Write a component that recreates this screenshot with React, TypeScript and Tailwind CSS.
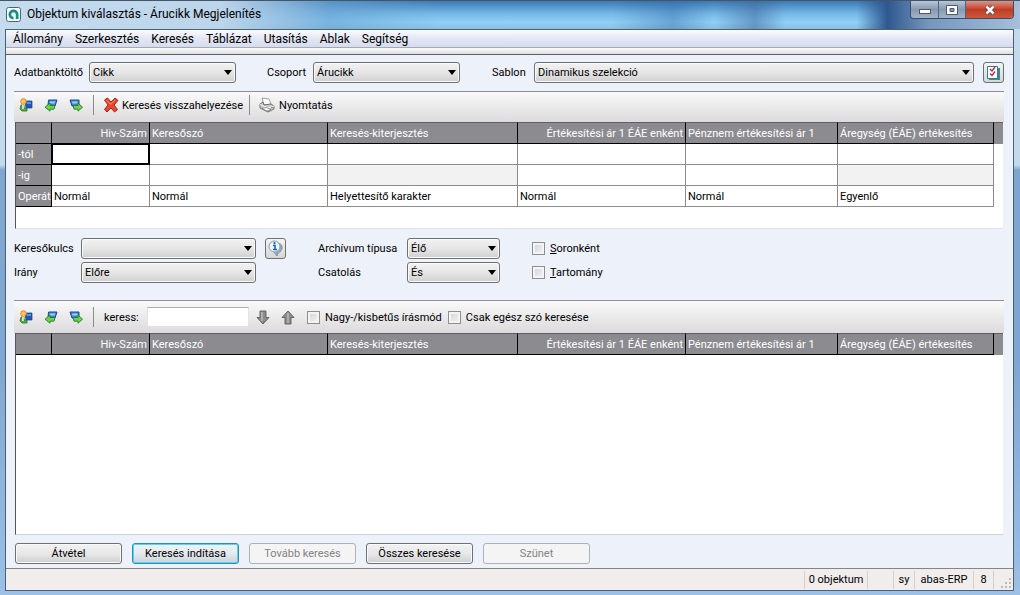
import { useId } from "react";
import type { ReactNode } from "react";

type Column = {
  key: string;
  title: string;
  col: string;
  alignRight?: boolean;
  operator: string;
  toLocked?: boolean;
};

const COLUMNS: Column[] = [
  { key: "ref", title: "Hiv-Szám", col: "w-[98px]", alignRight: true, operator: "Normál" },
  { key: "search", title: "Keresőszó", col: "w-[178px]", operator: "Normál" },
  { key: "ext", title: "Keresés-kiterjesztés", col: "w-[190px]", operator: "Helyettesítő karakter", toLocked: true },
  { key: "price", title: "Értékesítési ár 1 ÉÁE enként", col: "w-[168px]", alignRight: true, operator: "Normál" },
  { key: "currency", title: "Pénznem értékesítési ár 1", col: "w-[152px]", operator: "Normál" },
  { key: "unit", title: "Áregység (ÉÁE) értékesítés", col: "w-[156px]", operator: "Egyenlő", toLocked: true },
];

const MENU = ["Állomány", "Szerkesztés", "Keresés", "Táblázat", "Utasítás", "Ablak", "Segítség"];

function Select({ id, value, className }: { id: string; value: string; className: string }) {
  return (
    <div className={`relative h-[21px] ${className}`}>
      <select
        id={id}
        defaultValue={value}
        className="block h-full w-full appearance-none rounded-[3px] border border-[#707070] bg-linear-to-b from-[#f2f2f2] via-[#e6e6e6] to-[#cfcfcf] pr-5 pl-[3px] text-black shadow-[inset_0_0_0_1px_#fafafa]"
      >
        <option>{value}</option>
      </select>
      <svg className="pointer-events-none absolute top-2 right-1 h-[5px] w-2" viewBox="0 0 8 5">
        <path d="M0 0h8L4 5z" fill="#000" />
      </svg>
    </div>
  );
}

function Check({ children }: { children: ReactNode }) {
  const id = useId();
  return (
    <div className="flex items-center gap-[5px]">
      <input
        id={id}
        type="checkbox"
        className="size-[13px] appearance-none border border-[#8e8f8f] bg-linear-to-br from-[#cdd1d5] to-[#f6f6f6] shadow-[inset_0_0_0_2px_#f4f4f4] checked:from-[#3c5a9a]"
      />
      <label htmlFor={id}>{children}</label>
    </div>
  );
}

function RowIcon() {
  return (
    <svg width="14" height="14" viewBox="0 0 14 14">
      <path d="M6 3h7v7H7z" fill="#1f56b8" stroke="#173f86" strokeWidth=".7" />
      <path d="M8 4h4v2H8z" fill="#4c9be8" />
      <path d="M2 7h3v3h3v3H3L1 11z" fill="#4fae4a" stroke="#25702b" strokeWidth=".8" />
      <path d="M3 6h2v5H3z" fill="#d8d8c8" />
      <circle cx="4.500" cy="3.500" r="2.800" fill="#ffc45c" stroke="#d9801c" strokeWidth=".9" />
    </svg>
  );
}

function ShiftIcon({ right = false }: { right?: boolean }) {
  return (
    <svg width="14" height="14" viewBox="0 0 14 14">
      {right ? (
        <>
          <path d="M1 2h9v6H3z" fill="#3d7fdd" stroke="#1b4a94" />
          <path d="M3 3.500h5.500v2H3.500z" fill="#9bd3f7" />
          <path d="M4 7.500h5V5L13.500 9.200l-4.500 4v-2H5z" fill="#6fd04c" stroke="#277a25" strokeWidth=".9" />
        </>
      ) : (
        <>
          <path d="M4.500 2H13l-2 6H4z" fill="#3d7fdd" stroke="#1b4a94" />
          <path d="M6 3.500h5.500l-1 2H5.500z" fill="#9bd3f7" />
          <path d="M11 7.500H6V5L1 9.200l5 4v-2h4z" fill="#6fd04c" stroke="#277a25" strokeWidth=".9" />
        </>
      )}
    </svg>
  );
}

function ArrowIcon({ up = false }: { up?: boolean }) {
  return (
    <svg width="14" height="15" viewBox="0 0 14 15">
      <path
        d={up ? "M7 1l6 6.500h-3V14H4V7.500H1z" : "M4 1h6v6.500h3L7 14 1 7.500h3z"}
        fill="#8b8b8b"
        stroke="#666"
        strokeLinejoin="round"
      />
      <path d={up ? "M7 3v10" : "M6 2v9"} stroke="#bababa" strokeWidth="1.500" />
    </svg>
  );
}

function RowTools() {
  return (
    <div className="flex h-5 items-center gap-[11px] border-r border-[#8c8c8c] pr-[10px] pl-[5px]">
      <button type="button" aria-label="Sor beszúrása"><RowIcon /></button>
      <button type="button" aria-label="Előző"><ShiftIcon /></button>
      <button type="button" aria-label="Következő"><ShiftIcon right /></button>
    </div>
  );
}

function TableHead() {
  return (
    <>
      <colgroup>
        <col className="w-9" />
        {COLUMNS.map((c) => (
          <col key={c.key} className={c.col} />
        ))}
        <col />
      </colgroup>
      <thead>
        <tr className="h-[22px] bg-[#8b8b90] text-white">
          <td className="border-t border-r border-b border-t-[#5e5e64] border-r-black border-b-black" />
          {COLUMNS.map((c) => (
            <th
              key={c.key}
              scope="col"
              className={`overflow-hidden border-t border-r border-b border-t-[#5e5e64] border-r-black border-b-black px-[2px] font-normal whitespace-nowrap ${c.alignRight ? "text-right" : "text-left"}`}
            >
              {c.title}
            </th>
          ))}
          <td className="border-t border-[#5e5e64]" />
        </tr>
      </thead>
    </>
  );
}

function InputRow({ label, locked = false, focus = false }: { label: string; locked?: boolean; focus?: boolean }) {
  return (
    <tr className="h-[21px]">
      <th scope="row" className="border-r border-b border-black bg-[#8b8b90] px-[2px] text-left font-normal text-white">
        {label}
      </th>
      {COLUMNS.map((c, i) => {
        const active = focus && i === 0;
        return (
          <td
            key={c.key}
            className={`border-r border-b ${active ? "border-black" : "border-[#8c8c8c]"} ${locked && c.toLocked ? "bg-[#f2f2f2]" : ""}`}
          >
            <input
              aria-label={`${c.title} ${label}`}
              disabled={locked && c.toLocked}
              className={`block h-5 w-full px-[2px] outline-none ${active ? "border border-black" : ""}`}
            />
          </td>
        );
      })}
      <td />
    </tr>
  );
}

function PushButton({ children, primary, disabled }: { children: ReactNode; primary?: boolean; disabled?: boolean }) {
  const look = disabled
    ? "border-[#adb2b5] bg-[#f4f4f4] text-[#838383]"
    : primary
      ? "border-[#2a8fb8] bg-linear-to-b from-[#f0f4f6] via-[#e4eaee] to-[#c9d3da] shadow-[inset_0_0_0_1px_#5fd0f0]"
      : "border-[#707070] bg-linear-to-b from-[#f2f2f2] via-[#e8e8e8] to-[#cfcfcf] shadow-[inset_0_0_0_1px_#fafafa]";
  return (
    <button type="button" disabled={disabled} className={`h-[21px] w-[107px] rounded-[3px] border ${look}`}>
      {children}
    </button>
  );
}

const iconButton =
  "flex size-[21px] items-center justify-center rounded-[3px] border border-[#707070] bg-linear-to-b from-[#f4f4f4] to-[#d6d6d6]";
const toolbar = "flex items-center border-t border-[#8a9096] bg-linear-to-b from-[#fafafa] to-[#dcdadc]";

export default function App() {
  return (
    <div className="flex min-h-screen flex-col bg-[linear-gradient(180deg,#c3daec_0px,#c3daec_165px,#7fa6cf_170px,#7fa6d2_60%,#9cc0e6_100%)] pr-[6px] pb-1 pl-[5px] font-[Roboto,'Liberation_Sans',sans-serif] text-[11px] leading-[13px] text-black">
      {/* Title bar */}
      <header className="-mr-[6px] -ml-[5px] flex h-[29px] items-start justify-between border-t border-[#456] bg-[linear-gradient(90deg,#c5dcee_0px,#bcd5ea_220px,#6aa3d299_330px,#74b4e300_440px),linear-gradient(90deg,transparent_60%,#2f66a566_66%,transparent_70%,#3f6a9e88_74%,transparent_77%,transparent_84%,#2e588f_87%,#7596bd_91%,#a6bfdb_100%),linear-gradient(180deg,#3c7ab5_0%,#76b8e6_45%,#8fd0f5_75%,#8cbfe0_100%)] pr-[6px] pl-[6px]">
        <div className="flex h-[26px] items-center gap-[6px]">
          <svg width="15" height="15" viewBox="0 0 15 15">
            <rect x=".5" y=".5" width="14" height="14" rx="2" fill="#fff" stroke="#426778" />
            <rect x="2" y="2" width="11" height="11" rx="1" fill="#f4fbfa" />
            <path d="M7.500 2.500a5 5 0 0 1 5 5V12H9.800V7.500a2.300 2.300 0 1 0-2.300 2.300V12.500a5 5 0 0 1 0-10z" fill="#158f88" />
          </svg>
          <h1 className="text-[12px] leading-4">Objektum kiválasztás - Árucikk Megjelenítés</h1>
        </div>
        <div className="flex h-[18px] overflow-hidden rounded-b-[4px] border border-t-0 border-[#344e6b] text-white">
          <button type="button" aria-label="Kis méret" className="flex w-7 items-center justify-center border-r border-[#4b6584] bg-linear-to-b from-[#b9c7d7] via-[#8798b0] to-[#a4b5ca]">
            <svg width="12" height="5" viewBox="0 0 12 5" className="mt-1">
              <rect x=".5" y=".5" width="11" height="4" fill="#fff" stroke="#4c5870" />
            </svg>
          </button>
          <button type="button" aria-label="Teljes méret" className="flex w-[27px] items-center justify-center border-r border-[#4b6584] bg-linear-to-b from-[#b9c7d7] via-[#8798b0] to-[#a4b5ca]">
            <svg width="12" height="10" viewBox="0 0 12 10">
              <path d="M.5.500h11v9H.5zM4 3.500v3h4v-3z" fill="#fff" fillRule="evenodd" stroke="#4c5870" />
            </svg>
          </button>
          <button type="button" aria-label="Bezárás" className="flex w-[47px] items-center justify-center bg-linear-to-b from-[#dd9384] via-[#c03c25] to-[#c9593c]">
            <svg width="12" height="10" viewBox="0 0 12 10">
              <path d="M2.500 1.500l7 7M9.500 1.500l-7 7" stroke="#5c3038" strokeWidth="4" />
              <path d="M2.500 1.500l7 7M9.500 1.500l-7 7" stroke="#fff" strokeWidth="2.600" />
            </svg>
          </button>
        </div>
      </header>

      <div className="flex grow flex-col border border-[#4a6078] bg-[#edf1f9]">
        <nav className="flex h-[18px] items-center gap-3 border-b border-[#a3a9b8] bg-linear-to-b from-[#fbfcfe] via-[#e3e7f3] to-[#d7dced] px-[7px] text-[12px] leading-4">
          {MENU.map((item) => (
            <button key={item} type="button">{item}</button>
          ))}
        </nav>
        <div className="h-[7px] border-b border-[#5f5f5f] bg-linear-to-b from-[#fbfbfb] to-[#dedede]" />

        <main className="flex grow flex-col pt-[7px] pr-[9px] pb-1 pl-2">
          {/* Database selection */}
          <div className="flex items-center">
            <label htmlFor="database" className="w-[75px]">Adatbanktöltő</label>
            <Select id="database" value="Cikk" className="w-[147px]" />
            <label htmlFor="group" className="ml-[31px] w-[46px]">Csoport</label>
            <Select id="group" value="Árucikk" className="w-[147px]" />
            <label htmlFor="template" className="ml-8 w-[42px]">Sablon</label>
            <Select id="template" value="Dinamikus szelekció" className="grow" />
            <button type="button" aria-label="Sablon beállítása" className={`ml-[9px] ${iconButton}`}>
              <svg width="15" height="16" viewBox="0 0 15 16">
                <path d="M3 3h11v12H3z" fill="#3a8a98" />
                <path d="M1.500 1.500h10v12h-10z" fill="#fff" stroke="#2d7f96" />
                <path d="M4 4l2 2 3-4M4 8.500l2 2 3-4" fill="none" stroke="#c2263c" strokeWidth="1.400" />
              </svg>
            </button>
          </div>

          <div className={`mt-2 h-[31px] pb-1 ${toolbar}`}>
            <RowTools />
            <button type="button" className="flex h-5 items-center gap-[3px] border-r border-[#8c8c8c] pr-[6px] pl-[9px]">
              <svg width="16" height="16" viewBox="0 0 16 16">
                <path
                  d="M1.500 3L4.500 1 8 5l4-4 3 2.500L11 8l3.500 4.500L11.500 15 8 11l-4 4-2.500-2.500L5 8z"
                  fill="#e8452c"
                  stroke="#a3261a"
                  strokeLinejoin="round"
                />
                <path d="M3.500 3.200l4 4 4.500-4" fill="none" stroke="#ff9a80" />
              </svg>
              Keresés visszahelyezése
            </button>
            <button type="button" className="flex items-center gap-1 pl-[9px]">
              <svg width="16" height="16" viewBox="0 0 16 16">
                <path d="M3 1l7 1 2 5-7 1z" fill="#fff" stroke="#8c8c8c" strokeWidth=".8" />
                <path d="M1 7l3-2 1 3 7-1 3 2v3l-6 3-8-4z" fill="#c9c9c9" stroke="#666" strokeWidth=".9" />
                <path d="M1 7.500l8 3.500 6-2" fill="none" stroke="#f5f5f5" />
                <path d="M3 11.500l5 2.500 4-1.500-5-2z" fill="#fff" stroke="#777" strokeWidth=".7" />
                <path d="M12 10.500h2" stroke="#69a83a" />
              </svg>
              Nyomtatás
            </button>
          </div>

          {/* Search criteria */}
          <div className="mr-px ml-px border-b border-l border-b-[#dfe3e6] border-l-[#555] bg-white pb-[21px]">
            <table className="w-full table-fixed border-separate border-spacing-0">
              <TableHead />
              <tbody>
                <InputRow label="-tól" focus />
                <InputRow label="-ig" locked />
                <tr className="h-[21px]">
                  <th scope="row" className="overflow-hidden border-r border-b border-black bg-[#8b8b90] pl-[2px] text-left font-normal whitespace-nowrap text-white">
                    Operát
                  </th>
                  {COLUMNS.map((c) => (
                    <td key={c.key} className="border-r border-b border-[#8c8c8c] px-[2px]">{c.operator}</td>
                  ))}
                  <td />
                </tr>
              </tbody>
            </table>
          </div>

          {/* Search options */}
          <div className="mt-[9px] flex">
            <div className="grid grid-cols-[67px_175px_30px] items-center gap-y-[3px]">
              <label htmlFor="key">Keresőkulcs</label>
              <Select id="key" value="" className="w-full" />
              <button type="button" aria-label="Információ" className={`ml-[9px] ${iconButton}`}>
                <svg width="17" height="17" viewBox="0 0 17 17">
                  <path d="M11 3q5 1 4 6-1 3-4 4l-1 3-3-4z" fill="#a4adb8" stroke="#6d7a88" strokeWidth=".7" />
                  <circle cx="7.500" cy="6.500" r="5.500" fill="#eef6fc" stroke="#7d9cb8" />
                  <path d="M6 5.500h2v4M6 9.500h4" fill="none" stroke="#1f66b0" strokeWidth="1.600" />
                  <circle cx="7.500" cy="3.200" r="1.100" fill="#1f66b0" />
                </svg>
              </button>
              <label htmlFor="direction">Irány</label>
              <Select id="direction" value="Előre" className="w-full" />
            </div>
            <div className="ml-8 grid grid-cols-[89px_93px] items-center gap-y-[3px]">
              <label htmlFor="archive">Archívum típusa</label>
              <Select id="archive" value="Élő" className="w-full" />
              <label htmlFor="link">Csatolás</label>
              <Select id="link" value="És" className="w-full" />
            </div>
            <div className="ml-8 grid items-center gap-y-[3px]">
              <Check><u>S</u>oronként</Check>
              <Check><u>T</u>artomány</Check>
            </div>
          </div>

          <div className={`mt-[17px] h-[33px] ${toolbar}`}>
            <RowTools />
            <label htmlFor="find" className="ml-[10px] w-[43px]">keress:</label>
            <input id="find" className="h-5 w-[102px] border border-[#e3e3e3] border-t-[#abadb3] bg-white px-1 outline-none" />
            <button type="button" aria-label="Keresés lefelé" className="ml-[7px]"><ArrowIcon /></button>
            <button type="button" aria-label="Keresés felfelé" className="mr-3 ml-[11px]"><ArrowIcon up /></button>
            <Check>Nagy-/kisbetűs írásmód</Check>
            <div className="ml-[6px]">
              <Check>Csak egész szó keresése</Check>
            </div>
          </div>

          {/* Result list */}
          <div className="mr-px ml-px grow border-b border-l border-b-[#cdd2d6] border-l-[#555] bg-white">
            <table className="w-full table-fixed border-separate border-spacing-0">
              <TableHead />
            </table>
          </div>

          <div className="mt-2 ml-px flex gap-[10px]">
            <PushButton>Átvétel</PushButton>
            <PushButton primary>Keresés indítása</PushButton>
            <PushButton disabled>Tovább keresés</PushButton>
            <PushButton>Összes keresése</PushButton>
            <PushButton disabled>Szünet</PushButton>
          </div>
        </main>

        <footer className="flex h-[22px] items-center justify-end border-t border-[#858585] bg-[#f0edec]">
          <span className="flex h-[18px] w-[63px] items-center justify-center border-l border-[#d2d0cf]">0 objektum</span>
          <span className="h-[18px] w-[26px] border-l border-[#d2d0cf]" />
          <span className="flex h-[18px] w-[21px] items-center justify-center border-l border-[#d2d0cf]">sy</span>
          <span className="flex h-[18px] w-[59px] items-center justify-center border-l border-[#d2d0cf]">abas-ERP</span>
          <span className="flex h-[18px] w-5 items-center justify-center border-l border-[#d2d0cf]">8</span>
          <span className="flex h-[18px] w-5 items-end justify-end border-l border-[#d2d0cf]">
            <svg width="12" height="12" viewBox="0 0 12 12" fill="#bdbbb9">
              <path d="M8 1h2v2H8zM8 5h2v2H8zM8 9h2v2H8zM4 5h2v2H4zM4 9h2v2H4zM0 9h2v2H0z" />
            </svg>
          </span>
        </footer>
      </div>
    </div>
  );
}
